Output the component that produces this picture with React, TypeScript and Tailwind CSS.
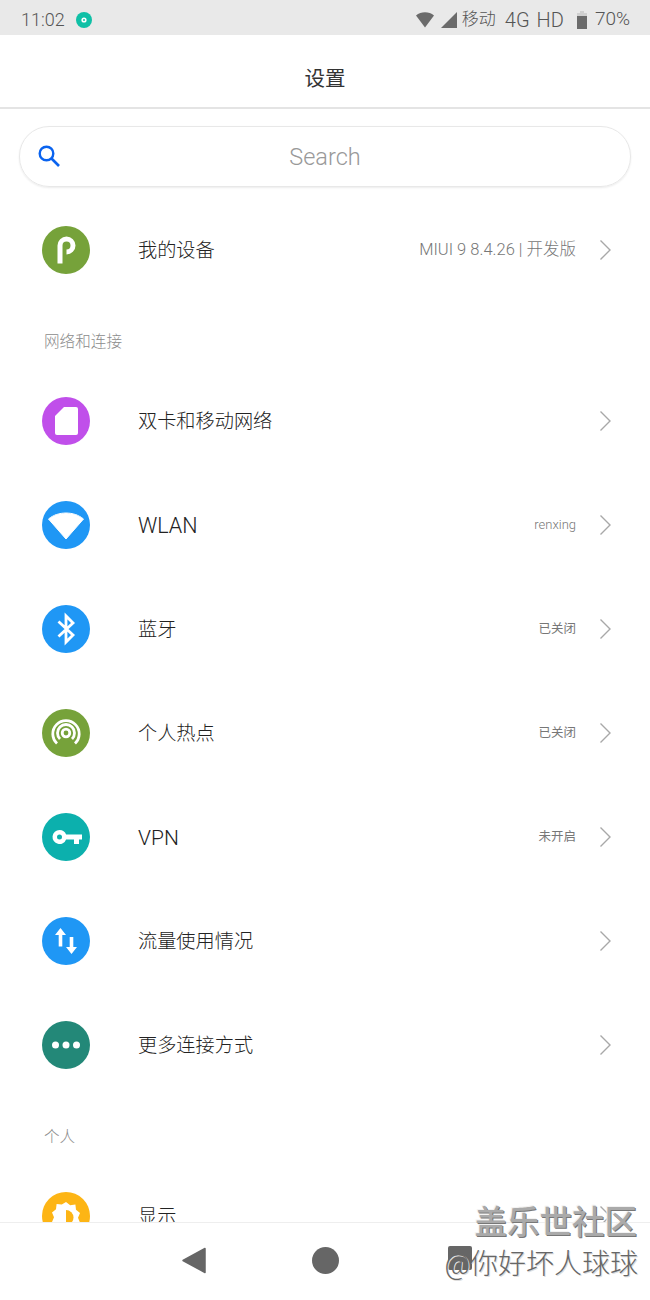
import type { ReactNode } from "react";

const FONT = "font-['Roboto','Noto_Sans_CJK_SC',sans-serif]";

interface RowProps {
  color: string;
  icon: ReactNode;
  title: string;
  titleClass?: string;
  value?: string;
  valueClass?: string;
}

function Chevron() {
  return (
    <svg width="13" height="22" viewBox="0 0 13 22" className="shrink-0">
      <path d="M1.5 1.5 L11 11 L1.5 20.5" fill="none" stroke="#a8a8a8" strokeWidth="1.4" />
    </svg>
  );
}

function Row({ color, icon, title, titleClass, value, valueClass }: RowProps) {
  return (
    <div className="h-[104px] shrink-0 flex items-center pl-[42px] pr-[38px]">
      <div className={`w-12 h-12 rounded-full flex items-center justify-center shrink-0 ${color}`}>
        {icon}
      </div>
      <div className={`ml-12 pt-[3px] font-light text-[#222] flex-1 ${titleClass ?? "text-[19.2px]"}`}>{title}</div>
      {value && <div className={`text-[#777] mr-[23px] ${valueClass ?? "text-[12.5px]"}`}>{value}</div>}
      <Chevron />
    </div>
  );
}

function SectionLabel({ children }: { children: ReactNode }) {
  return (
    <div className="h-[67px] shrink-0 pl-[44px] pt-[29px] text-[15.6px] leading-[22px] font-light text-[#8c8c8c]">
      {children}
    </div>
  );
}

const icons = {
  device: (
    <svg width="48" height="48" viewBox="0 0 48 48">
      <path d="M18 37.5 V19.5 a6.5 6.5 0 1 1 6.5 6.5" fill="none" stroke="#fff" strokeWidth="5" />
    </svg>
  ),
  sim: (
    <svg width="48" height="48" viewBox="0 0 48 48">
      <path d="M22 10 H34 a2 2 0 0 1 2 2 V36 a2 2 0 0 1 -2 2 H15 a2 2 0 0 1 -2 -2 V19 Z" fill="#fff" />
    </svg>
  ),
  wifi: (
    <svg width="48" height="48" viewBox="0 0 48 48">
      <path d="M6.5 18 C16 10 32 10 41.5 18 L24 38 Z" fill="#fff" strokeLinejoin="round" stroke="#fff" strokeWidth="1" />
    </svg>
  ),
  bluetooth: (
    <svg width="48" height="48" viewBox="0 0 48 48">
      <path d="M16.5 16.5 L31 30 L24 37 V11 L31 18 L16.5 31.5" fill="none" stroke="#fff" strokeWidth="2.8" />
    </svg>
  ),
  hotspot: (
    <svg width="48" height="48" viewBox="0 0 48 48" fill="none" stroke="#fff" strokeWidth="2.8">
      <circle cx="24" cy="24" r="3.8" />
      <path d="M18 30 a8.5 8.5 0 1 1 12 0" />
      <path d="M15 34.5 a13.2 13.2 0 1 1 18 0" />
    </svg>
  ),
  vpn: (
    <svg width="48" height="48" viewBox="0 0 48 48">
      <path
        fillRule="evenodd"
        d="M17.5 17 a7 7 0 0 1 6.6 4.6 H40 V26.4 H37 V31 H32 V26.4 H24.1 A7 7 0 1 1 17.5 17 Z M17.5 21.5 a2.5 2.5 0 1 0 0 5 a2.5 2.5 0 1 0 0 -5 Z"
        fill="#fff"
      />
    </svg>
  ),
  traffic: (
    <svg width="48" height="48" viewBox="0 0 48 48" fill="#fff">
      <path d="M18.5 11 L24 18 H20.3 V29.5 H16.7 V18 H13 Z" />
      <path d="M29.5 37 L24 30 H27.7 V20 H31.3 V30 H35 Z" />
    </svg>
  ),
  more: (
    <svg width="48" height="48" viewBox="0 0 48 48" fill="#fff">
      <circle cx="13.5" cy="24" r="3.5" />
      <circle cx="24" cy="24" r="3.5" />
      <circle cx="34.5" cy="24" r="3.5" />
    </svg>
  ),
  display: (
    <svg width="48" height="48" viewBox="0 0 48 48">
      <path
        d="M24 10 l4.2 3.2 5.2 -.6 .6 5.2 4 3.2 -2 4.8 2 4.8 -4 3.2 -.6 5.2 -5.2 -.6 L24 41 l-4.2 -3.2 -5.2 .6 -.6 -5.2 -4 -3.2 2 -4.8 -2 -4.8 4 -3.2 .6 -5.2 5.2 .6 Z"
        fill="#fff"
      />
      <path d="M24 18 a7.5 7.5 0 0 1 0 15 Z" fill="#fdb515" />
    </svg>
  ),
};

function StatusBar() {
  return (
    <div className="h-[35px] shrink-0 bg-[#e9e9e9] flex items-center pl-[21px] pr-[20px] pt-[4px] text-[#555] text-[19px] font-light">
      <span className="text-[18px]">11:02</span>
      <svg width="16" height="16" viewBox="0 0 16 16" className="ml-[11px]">
        <circle cx="8" cy="8" r="8" fill="#0fc0a6" />
        <circle cx="8" cy="8" r="2.6" fill="#fff" />
        <circle cx="8" cy="8" r="1" fill="#0fc0a6" />
      </svg>
      <div className="flex-1" />
      <svg width="18" height="16" viewBox="0 0 18 16">
        <path d="M0 3.5 C5 -0.8 13 -0.8 18 3.5 L9 15.5 Z" fill="#6b6b6b" />
      </svg>
      <svg width="16" height="16" viewBox="0 0 16 16" className="ml-[7px]">
        <path d="M16 0 V16 H0 Z" fill="#6b6b6b" />
      </svg>
      <span className="ml-[5px] text-[17px]">移动</span>
      <span className="ml-[9px] text-[20px]">4G</span>
      <span className="ml-[7px] text-[20px]">HD</span>
      <svg width="10" height="18" viewBox="0 0 10 18" className="ml-[13px]">
        <path d="M3 0 H7 V2 H10 V18 H0 V2 H3 Z" fill="#d0d0d0" />
        <path d="M0 5 H10 V18 H0 Z" fill="#6b6b6b" />
      </svg>
      <span className="ml-[8px]">70%</span>
    </div>
  );
}

export default function App() {
  return (
    <div className={`relative w-[650px] h-[1300px] bg-white overflow-hidden flex flex-col ${FONT}`}>
      <StatusBar />
      <div className="h-[74px] shrink-0 border-b-2 border-[#e4e4e4] flex items-center justify-center pt-[17px] text-[20.5px] text-[#333]">
        设置
      </div>

      <div className="flex-1 overflow-hidden flex flex-col">
        <div className="mt-[17px] mx-[19px] h-[61px] shrink-0 rounded-[30px] border border-[#e8e8e8] shadow-[0_1px_2px_rgba(0,0,0,0.08)] flex items-center relative">
          <svg width="24" height="24" viewBox="0 0 24 24" className="absolute left-[17px] top-[17px]">
            <circle cx="9.5" cy="9.5" r="6.8" fill="none" stroke="#0a63ef" strokeWidth="2.4" />
            <path d="M14.5 14.5 L22 22" stroke="#0a63ef" strokeWidth="2.6" />
          </svg>
          <div className="w-full text-center pt-[3px] text-[23.5px] font-light text-[#999]">Search</div>
        </div>

        <div className="h-[11px] shrink-0" />
        <Row
          color="bg-[#76a23a]"
          icon={icons.device}
          title="我的设备"
          value="MIUI 9 8.4.26 | 开发版"
          valueClass="text-[16.5px] font-light"
        />
        <SectionLabel>网络和连接</SectionLabel>
        <Row color="bg-[#c04fea]" icon={icons.sim} title="双卡和移动网络" />
        <Row
          color="bg-[#1f97f5]"
          icon={icons.wifi}
          title="WLAN"
          titleClass="text-[21.5px]"
          value="renxing"
          valueClass="text-[13px] font-light"
        />
        <Row color="bg-[#1f97f5]" icon={icons.bluetooth} title="蓝牙" value="已关闭" />
        <Row color="bg-[#76a23a]" icon={icons.hotspot} title="个人热点" value="已关闭" />
        <Row color="bg-[#0cb0ad]" icon={icons.vpn} title="VPN" titleClass="text-[21px]" value="未开启" />
        <Row color="bg-[#1f97f5]" icon={icons.traffic} title="流量使用情况" />
        <Row color="bg-[#238878]" icon={icons.more} title="更多连接方式" />
        <SectionLabel>个人</SectionLabel>
        <Row color="bg-[#fdb515]" icon={icons.display} title="显示" />
      </div>

      <div className="h-[78px] shrink-0 bg-white border-t border-[#eeeeee] flex items-center pl-[182px] pb-[3px] relative z-10">
        <svg width="24" height="27" viewBox="0 0 24 27">
          <path d="M23 1.5 V25.5 L1 13.5 Z" fill="#666" stroke="#666" strokeWidth="1.5" strokeLinejoin="round" />
        </svg>
        <div className="ml-[106px] w-[27px] h-[27px] rounded-full bg-[#666]" />
        <div className="ml-[109px] w-[24px] h-[24px] rounded-[2px] bg-[#666] mb-[4px]" />
      </div>

      <div className="absolute z-20 right-[13px] top-[1204px] text-[32.5px] leading-[38px] font-medium text-[#aaa] [text-shadow:1px_1px_0_#777,-1px_-1px_0_#f2f2f2]">
        盖乐世社区
      </div>
      <div className="absolute z-20 right-[12px] top-[1246px] text-[28px] leading-[38px] font-light text-[#666] [text-shadow:1px_1px_0_#ddd]">
        @你好坏人球球
      </div>
    </div>
  );
}
